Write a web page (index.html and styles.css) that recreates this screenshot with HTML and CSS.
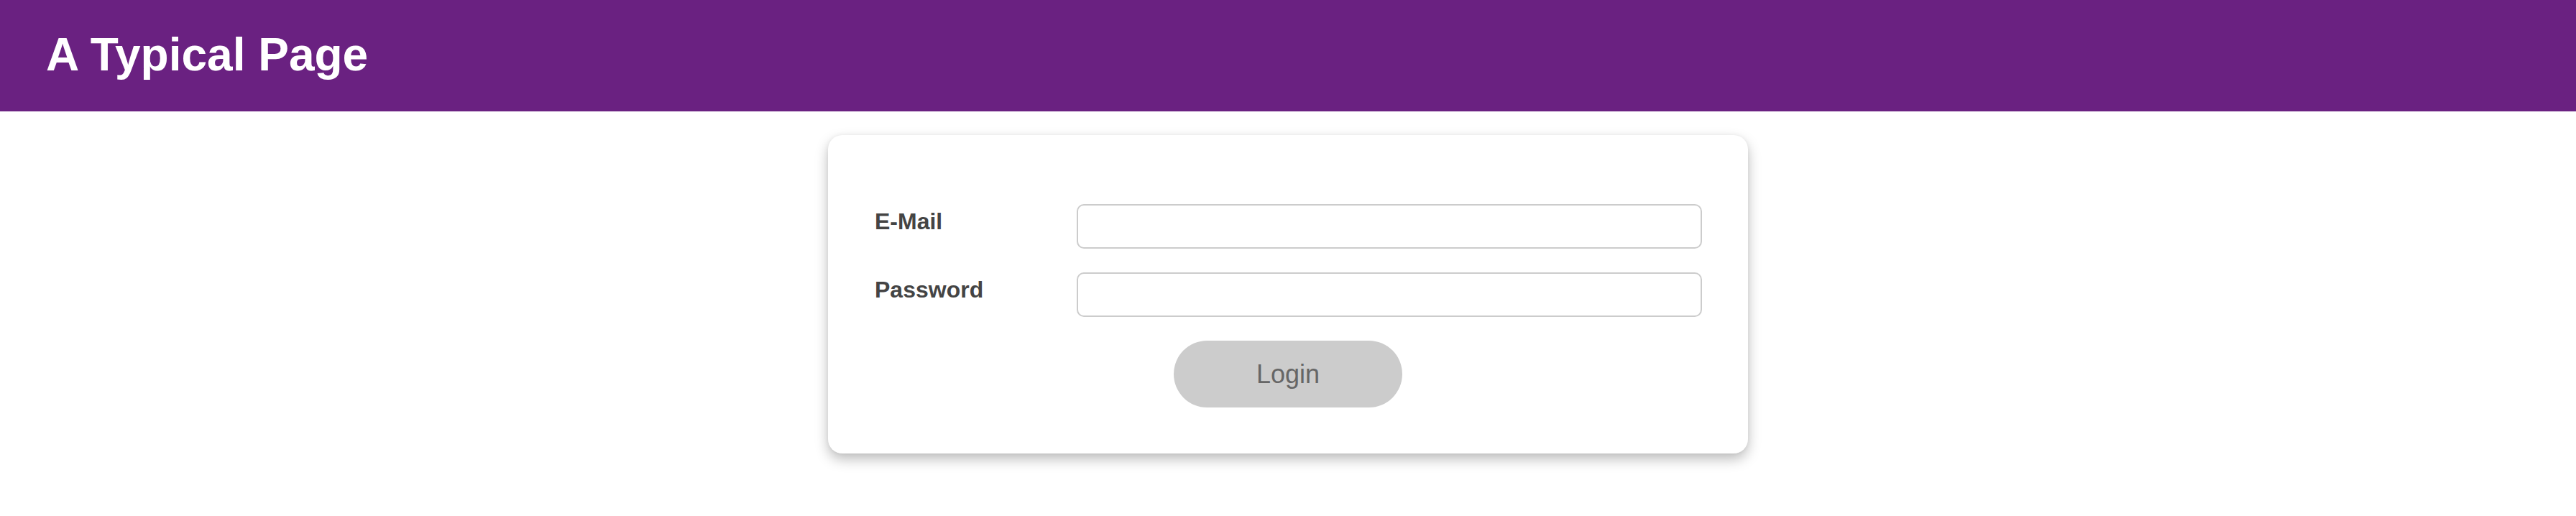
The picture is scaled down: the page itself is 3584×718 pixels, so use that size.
FILE: index.html
```html
<!DOCTYPE html>
<html lang="en">
<head>
<meta charset="utf-8">
<title>A Typical Page</title>
<link rel="stylesheet" href="styles.css">
</head>
<body>
<header class="topbar">
  <h1 class="title">A Typical Page</h1>
</header>
<main class="page">
  <form class="card">
    <div class="form-grid">
      <label class="field-label" for="email">E-Mail</label>
      <input class="field-input" id="email" type="email">
      <label class="field-label" for="password">Password</label>
      <input class="field-input" id="password" type="password">
      <button class="login-btn" type="button">Login</button>
    </div>
  </form>
</main>
</body>
</html>
```
FILE: styles.css
```css
* { box-sizing: border-box; }
html, body { margin: 0; padding: 0; background: #fff; }
body { font-family: "Liberation Sans", Arial, Helvetica, sans-serif; }

.topbar {
  background: #6a2181;
  height: 155px;
  padding: 39px 64px 0;
}
.title {
  margin: 0;
  color: #fff;
  font-size: 64px;
  font-weight: bold;
  line-height: normal;
}

.page {
  display: flex;
  justify-content: center;
  padding-top: 33px;
  padding-bottom: 40px;
}
.card {
  width: 1280px;
  background: #fff;
  border-radius: 20px;
  box-shadow: 0 8px 18px rgba(0, 0, 0, 0.26), 0 0 6px rgba(0, 0, 0, 0.05);
  padding: 96px 64px 64px;
}
.form-grid {
  display: grid;
  grid-template-columns: 282px 1fr;
  row-gap: 33px;
}
.field-label {
  color: #444;
  font-size: 32px;
  font-weight: bold;
  line-height: normal;
  padding-top: 6px;
  padding-left: 1px;
}
.field-input {
  height: 62px;
  border: 2px solid #cccccc;
  border-radius: 10px;
  background: #fff;
  font-size: 32px;
  padding: 0 16px;
  outline: none;
}
.login-btn {
  grid-column: 1 / -1;
  justify-self: center;
  width: 318px;
  height: 93px;
  border: none;
  border-radius: 47px;
  background: #cccccc;
  color: #666;
  font-family: "Liberation Sans", Arial, Helvetica, sans-serif;
  font-size: 36px;
  cursor: pointer;
}
```
